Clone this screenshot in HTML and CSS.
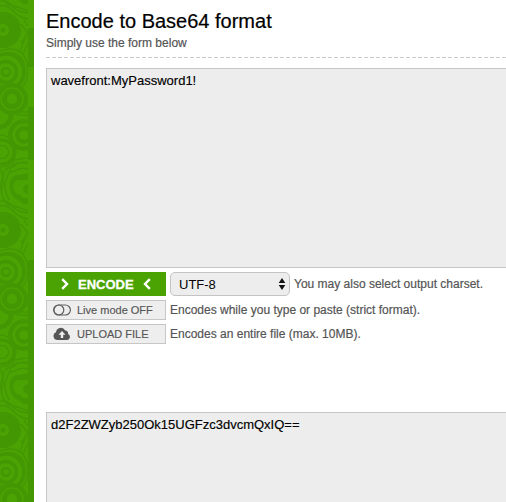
FILE: index.html
```html
<!DOCTYPE html>
<html lang="en">
<head>
<meta charset="utf-8">
<title>Encode to Base64 format</title>
<link rel="stylesheet" href="styles.css">
</head>
<body>
<div class="page">
<div class="side">
<svg class="art" width="28" height="502" viewBox="0 0 28 502">
<defs>
<pattern id="rings" width="28" height="200" patternUnits="userSpaceOnUse">
<rect width="28" height="200" fill="#4ba303"/>
<g fill="none" stroke="#439702" stroke-width="1.5">
<path d="M0 1Q7 0 12 6T28 13M0 6Q8 5 13 11T28 19M21 24L28 33L21 43M24 20L28 26M20 52L25 38M23 54L28 43M0 51Q22 44 27 63Q30 80 21 88Q26 96 24 103L28 106"/>
<path d="M0 54Q20 49 24 64Q27 77 18 86M0 86L7 86M1 91Q5 86 12 86Q25 87 25 99Q25 106 20 113"/>
<circle cx="0" cy="151" r="16"/><path d="M14 112L28 112M15 115L28 115M9 172L14 160L28 158M13 168L17 163L28 162M0 168Q5 177 2 190"/>
<path d="M4 200Q-1 188 2 180Q4 167 12 166Q20 160 28 164M9 200Q3 188 6 180Q8 171 15 171Q20 167 28 169"/>
<path d="M4 0Q7 5 13 6T28 11"/>
</g>
<circle cx="3" cy="30" r="18" fill="#439702"/><circle cx="3" cy="30" r="6" fill="#4ba303"/><circle cx="3" cy="30" r="2.5" fill="#439702"/>
<g fill="none" stroke="#439702" stroke-width="3.6"><circle cx="6" cy="72" r="18"/><circle cx="6" cy="72" r="10.5"/><circle cx="6" cy="72" r="4" stroke-width="2.5"/></g>
<circle cx="-1" cy="115" r="17" fill="#4ba303"/><circle cx="-1" cy="115" r="12" fill="none" stroke="#439702" stroke-width="5"/>
<circle cx="12" cy="99" r="16" fill="#439702"/><circle cx="12" cy="99" r="11" fill="none" stroke="#4ba303" stroke-width="1.5"/><circle cx="12" cy="99" r="5" fill="#4ba303"/>
<circle cx="24" cy="135" r="16" fill="#439702"/><circle cx="24" cy="135" r="11.5" fill="#4ba303"/><circle cx="24" cy="135" r="9" fill="#439702"/><circle cx="24" cy="135" r="4.5" fill="#4ba303"/>
<g fill="none" stroke="#439702" stroke-width="3"><circle cx="2" cy="152" r="12"/><circle cx="2" cy="152" r="6.5" stroke-width="1.5"/></g>
<path id="blob" d="M11 193Q7 180 15 175Q22 175 28 173V204Q23 206 19 200Q14 200 11 193" fill="#439702"/>
<use href="#blob" y="-200"/>
<path d="M14 190Q11 181 19 180Q24 181 28 179V198Q23 199 21 195Q16 195 14 190" fill="#4ba303"/><circle cx="28" cy="189" r="5" fill="#439702"/>
</pattern>
</defs>
<rect width="28" height="502" fill="url(#rings)"/>
</svg>
<div class="edge"></div>
</div>
<main class="content">
<h1>Encode to Base64 format</h1>
<p class="lead">Simply use the form below</p>
<div class="box input">wavefront:MyPassword1!</div>
<div class="row first">
<div class="encode">
<svg width="8" height="12" viewBox="0 0 8 12"><path d="M1.2 1.2L6 6L1.2 10.8"/></svg>
<span class="encode-text">ENCODE</span>
<svg width="8" height="12" viewBox="0 0 8 12"><path d="M6.8 1.2L2 6L6.8 10.8"/></svg>
</div>
<div class="select"><span class="select-text">UTF-8</span>
<svg width="8" height="12" viewBox="0 0 8 12"><path d="M4 0L7.3 5H.7ZM4 12L.7 7H7.3Z" fill="#111"/></svg>
</div>
<span class="note">You may also select output charset.</span>
</div>
<div class="row">
<div class="button">
<svg width="18" height="12" viewBox="0 0 18 12"><rect x=".8" y="1" width="16.6" height="10" rx="5" fill="none" stroke="#606060" stroke-width="1.2"/><circle cx="5.8" cy="6" r="5" fill="none" stroke="#606060" stroke-width="1.2"/></svg>
<span class="live">Live mode OFF</span>
</div>
<span class="note">Encodes while you type or paste (strict format).</span>
</div>
<div class="row">
<div class="button">
<svg width="18" height="14" viewBox="0 0 18 14"><path d="M4.5 13A4 4 0 0 1 3 5.3A4.9 4.9 0 0 1 12.2 3.4A2.8 2.8 0 0 1 15 6.9A3.2 3.2 0 0 1 14.2 13Z" fill="#555"/><path d="M9 4L12.5 7.7H10.2V11H7.8V7.7H5.5Z" fill="#eee"/></svg>
<span class="upload">UPLOAD FILE</span>
</div>
<span class="note">Encodes an entire file (max. 10MB).</span>
</div>
<div class="box output">d2F2ZWZyb250Ok15UGFzc3dvcmQxIQ==</div>
</main>
</div>
</body>
</html>
```
FILE: styles.css
```css
* { box-sizing: border-box; }
body { margin: 0; background: #fff; font-family: "Liberation Sans", Arial, sans-serif; overflow: hidden; }
.page { display: flex; height: 502px; overflow: hidden; }
.side { display: flex; flex: 0 0 34px; }
.art { display: block; }
.edge {
  width: 6px;
  background: linear-gradient(#4ba303 28px, #439702 28px 67px, #4ba303 67px 107px, #439702 107px 160px, #4ba303 160px 260px, #439702 260px);
}
.content { flex: 0 0 480px; padding: 8px 0 0 12px; }
h1 { margin: 0; font-size: 20px; font-weight: 400; line-height: 26px; color: #000; white-space: nowrap; -webkit-text-stroke: .2px #000; }
.lead { margin: 0 0 10px; height: 24px; font-size: 12px; line-height: 18px; color: #555; -webkit-text-stroke: .2px #555; background: repeating-linear-gradient(90deg, #ccc 0 4px, transparent 4px 6px) 0 100% / 100% 1px no-repeat; }
.box { border: 1px solid #c6c6c6; background: #ededed; padding: 4px; font-size: 13px; line-height: 16px; color: #000; -webkit-text-stroke: .15px #000; }
.input { height: 200px; }
.output { height: 200px; margin-top: 68px; }
.row { display: flex; gap: 4px; height: 20px; margin-top: 4px; align-items: center; }
.row.first { height: 24px; }
.encode { display: flex; align-items: center; width: 120px; height: 24px; padding: 0 15px; gap: 9px; background: #4ba303; color: #fff; font-size: 13px; font-weight: 700; -webkit-text-stroke: .3px #fff; }
.encode svg { flex: none; fill: none; stroke: #fff; stroke-width: 2.4; }
.encode-text { width: 56px; white-space: nowrap; }
.select { display: flex; align-items: center; justify-content: space-between; width: 120px; height: 24px; padding: 0 3px 0 8px; border: 1px solid #c4c4c4; border-radius: 5px; background: #ededed; font-size: 13px; color: #000; }
.button { display: flex; align-items: center; gap: 6px; width: 120px; height: 20px; padding-left: 6px; border: 1px solid #c6c6c6; background: #eee; font-size: 11px; color: #555; white-space: nowrap; -webkit-text-stroke: .15px #555; }
.button svg { flex: none; }
.note { font-size: 12px; color: #555; white-space: nowrap; -webkit-text-stroke: .2px #555; }
```
